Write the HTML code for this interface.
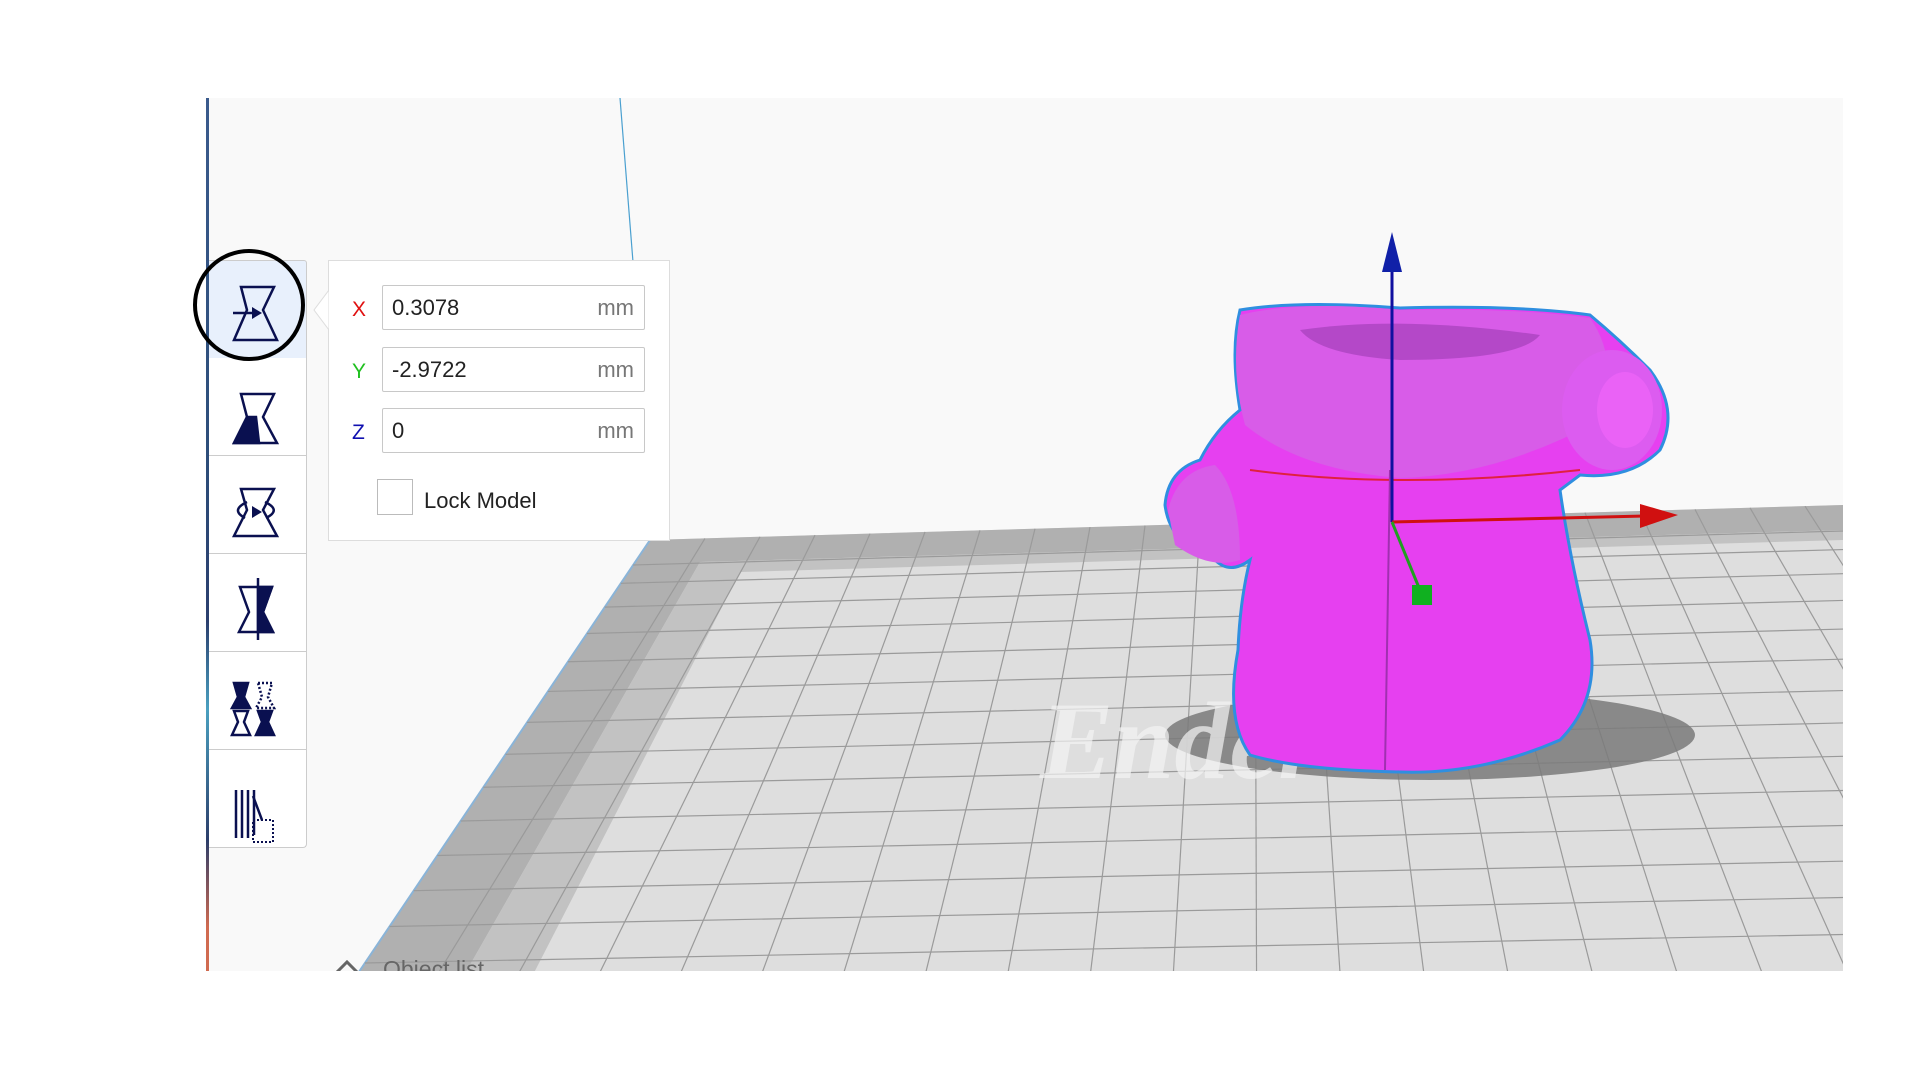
<!DOCTYPE html>
<html><head><meta charset="utf-8"><style>
html,body{margin:0;padding:0;background:#fff;width:1920px;height:1080px;overflow:hidden;font-family:"Liberation Sans",sans-serif}
#vp{position:absolute;left:206px;top:98px;width:1637px;height:873px;background:#f9f9f9;overflow:hidden}
#lb{position:absolute;left:206px;top:98px;width:3px;height:873px;background:linear-gradient(#3a5a8c,#2d4e7a 40%,#2b3f6e 60%,#4aa0c0 70%,#2c3e6a 85%,#d06a50 95%)}
.tb{position:absolute;left:209px;width:97px;height:97px;background:#fff;border-right:1px solid #ccc;border-bottom:1px solid #ccc}
.panel{position:absolute;left:328px;top:260px;width:340px;height:279px;background:#fff;border:1px solid #ddd}
.inp{position:absolute;left:382px;width:261px;height:43px;border:1px solid #c8c8c8;border-radius:2px;background:#fff;font-size:22px;color:#222}
.inp span{position:absolute;left:9px;top:9px}
.inp i{position:absolute;right:10px;top:9px;font-style:normal;color:#777}
.lab{position:absolute;left:352px;font-size:21px}
</style></head><body>
<div id="vp"></div>
<svg width="1920" height="1080" style="position:absolute;left:0;top:0">
<defs><clipPath id="c"><rect x="206" y="98" width="1637" height="873"/></clipPath></defs>
<g clip-path="url(#c)">
<line x1="620" y1="98" x2="633" y2="262" stroke="#4aa0d0" stroke-width="1.2"/>
<polygon points="650,540 1843,505 1843,1000 340,1000" fill="#dedede"/>
<polygon points="650,540 1843,505 1843,530 700,562 450,1000 340,1000" fill="#b0b0b0"/>
<polygon points="700,562 1843,530 1843,540 740,572 520,1000 450,1000" fill="#c2c2c2"/>
<line x1="650" y1="540" x2="340" y2="1000" stroke="#8ab4d8" stroke-width="2"/>
<g id="grid" stroke="#9a9a9a" stroke-width="1.2"></g>
<ellipse cx="1430" cy="735" rx="265" ry="45" fill="#7a7a7a" opacity=".85"/>
<text x="1040" y="778" font-family="Liberation Serif" font-size="110" font-style="italic" font-weight="bold" fill="#f4f4f4" opacity=".7">Ender</text>
<path d="M1240,310 Q1300,300 1400,308 Q1520,305 1590,315 Q1620,340 1650,370 Q1680,410 1660,450 Q1630,480 1580,475 L1560,490 Q1570,560 1590,640 Q1600,700 1560,740 Q1480,775 1400,772 Q1300,770 1250,755 Q1225,720 1238,650 Q1240,600 1250,560 Q1230,575 1215,560 Q1170,545 1165,505 Q1168,470 1200,460 Q1215,430 1240,410 Q1230,350 1240,310Z" fill="#e640f0" stroke="#2f8fe0" stroke-width="3"/>
<path d="M1240,315 Q1300,300 1400,310 Q1520,308 1590,318 Q1620,360 1600,420 Q1500,475 1400,478 Q1300,470 1245,425 Q1230,370 1240,315Z" fill="#d85ce8"/>
<path d="M1300,330 Q1400,315 1540,335 Q1520,360 1400,360 Q1320,355 1300,330Z" fill="#b448c8"/>
<path d="M1250,470 Q1400,490 1580,470" stroke="#e02040" stroke-width="2" fill="none"/>
<ellipse cx="1612" cy="410" rx="50" ry="60" fill="#dc5cf0"/>
<ellipse cx="1625" cy="410" rx="28" ry="38" fill="#ea62f6"/>
<path d="M1168,510 Q1178,470 1215,465 Q1240,490 1240,560 Q1210,570 1175,545Z" fill="#d85ce8"/>
<path d="M1390,470 L1385,770" stroke="#a030b0" stroke-width="2" fill="none"/>
<line x1="1392" y1="522" x2="1392" y2="265" stroke="#1010a0" stroke-width="3"/>
<polygon points="1392,232 1382,272 1402,272" fill="#1020a8"/>
<line x1="1392" y1="522" x2="1645" y2="516" stroke="#d01010" stroke-width="3"/>
<polygon points="1678,515 1640,504 1640,528" fill="#d01010"/>
<line x1="1392" y1="522" x2="1422" y2="595" stroke="#20a020" stroke-width="3"/>
<rect x="1412" y="585" width="20" height="20" fill="#10b020"/>
<text x="383" y="977" font-size="23" fill="#666">Object list</text>
<polyline points="337,972 347,962 357,972" fill="none" stroke="#666" stroke-width="3"/>
</g>
</svg>
<div id="lb"></div>
<div class="tb" style="top:260px;background:#e8f0fc;border-top:1px solid #ccc;border-radius:0 3px 0 0"></div>
<div class="tb" style="top:358px"></div>
<div class="tb" style="top:456px"></div>
<div class="tb" style="top:554px"></div>
<div class="tb" style="top:652px"></div>
<div class="tb" style="top:750px;border-radius:0 0 4px 0"></div>
<svg width="1920" height="1080" style="position:absolute;left:0;top:0">
<g fill="none" stroke="#0a1050" stroke-width="2.5" fill-rule="evenodd">
<path d="M241,287 L274,287 L263,310 L277,340 L234,340 L247,310Z"/>
<line x1="233" y1="313" x2="256" y2="313"/><polygon points="262,313 252,307 252,319" fill="#0a1050" stroke="none"/>
<path d="M241,394 L274,394 L263,417 L277,443 L234,443 L247,417Z"/>
<path d="M234,443 L247,417 L256,417 L259,443Z" fill="#0a1050"/>
<path d="M241,489 L274,489 L263,510 L277,536 L234,536 L247,510Z"/>
<path d="M247,502 Q230,510 245,518 M265,502 Q282,510 266,518"/>
<polygon points="262,512 252,506 252,518" fill="#0a1050" stroke="none"/>
<path d="M240,587 L272,587 L263,612 L273,632 L239,632 L249,612Z"/>
<path d="M258,587 L272,587 L263,612 L273,632 L258,632Z" fill="#0a1050"/>
<line x1="258" y1="578" x2="258" y2="640"/>
<path d="M234,683 L248,683 L244,697 L250,708 L232,708 L238,697Z" fill="#0a1050"/>
<path d="M258,683 L272,683 L268,697 L274,708 L256,708 L262,697Z" stroke-dasharray="2 2"/>
<path d="M234,711 L248,711 L244,722 L250,735 L232,735 L238,722Z"/>
<path d="M258,711 L272,711 L268,722 L274,735 L256,735 L262,722Z" fill="#0a1050"/>
<path d="M236,790 V838 M242,790 V838 M248,790 V838 M254,790 V835"/>
<path d="M253,796 L262,820"/>
<rect x="253" y="820" width="20" height="22" stroke-dasharray="2 2" stroke-width="2"/>
</g>
<circle cx="249" cy="305" r="54" fill="none" stroke="#000" stroke-width="4"/>
</svg>
<div class="panel"></div>
<svg width="20" height="40" style="position:absolute;left:311px;top:290px"><polygon points="18,0 3,20 18,40" fill="#fff" stroke="#ddd"/><rect x="18" y="0" width="2" height="40" fill="#fff"/></svg>
<div class="lab" style="top:298px;color:#e01010">X</div>
<div class="lab" style="top:360px;color:#20c020">Y</div>
<div class="lab" style="top:421px;color:#1010b0">Z</div>
<div class="inp" style="top:285px"><span>0.3078</span><i>mm</i></div>
<div class="inp" style="top:347px"><span>-2.9722</span><i>mm</i></div>
<div class="inp" style="top:408px"><span>0</span><i>mm</i></div>
<div style="position:absolute;left:377px;top:479px;width:34px;height:34px;border:1px solid #bbb;background:#fff"></div>
<div style="position:absolute;left:424px;top:488px;font-size:22px;color:#222">Lock Model</div>
<script>
var g=document.getElementById('grid'),s='';
function L(a,b,c,d){s+='<line x1="'+a+'" y1="'+b+'" x2="'+c+'" y2="'+d+'"/>';}
var vx=1252,vy=-353;
for(var i=1;i<24;i++){var x1=650+i*55,y1=540-i*55*0.0293;var x2=vx+(x1-vx)*(1000-vy)/(y1-vy);L(x1,y1,x2,1000);}
for(var j=0;j<15;j++){var u=Math.pow(j/14,1.2);var yl=565+u*435;var xl=650-(yl-540)*0.674;L(xl,yl,1843,yl-34+u*6);}
g.innerHTML=s;
</script>
</body></html>
